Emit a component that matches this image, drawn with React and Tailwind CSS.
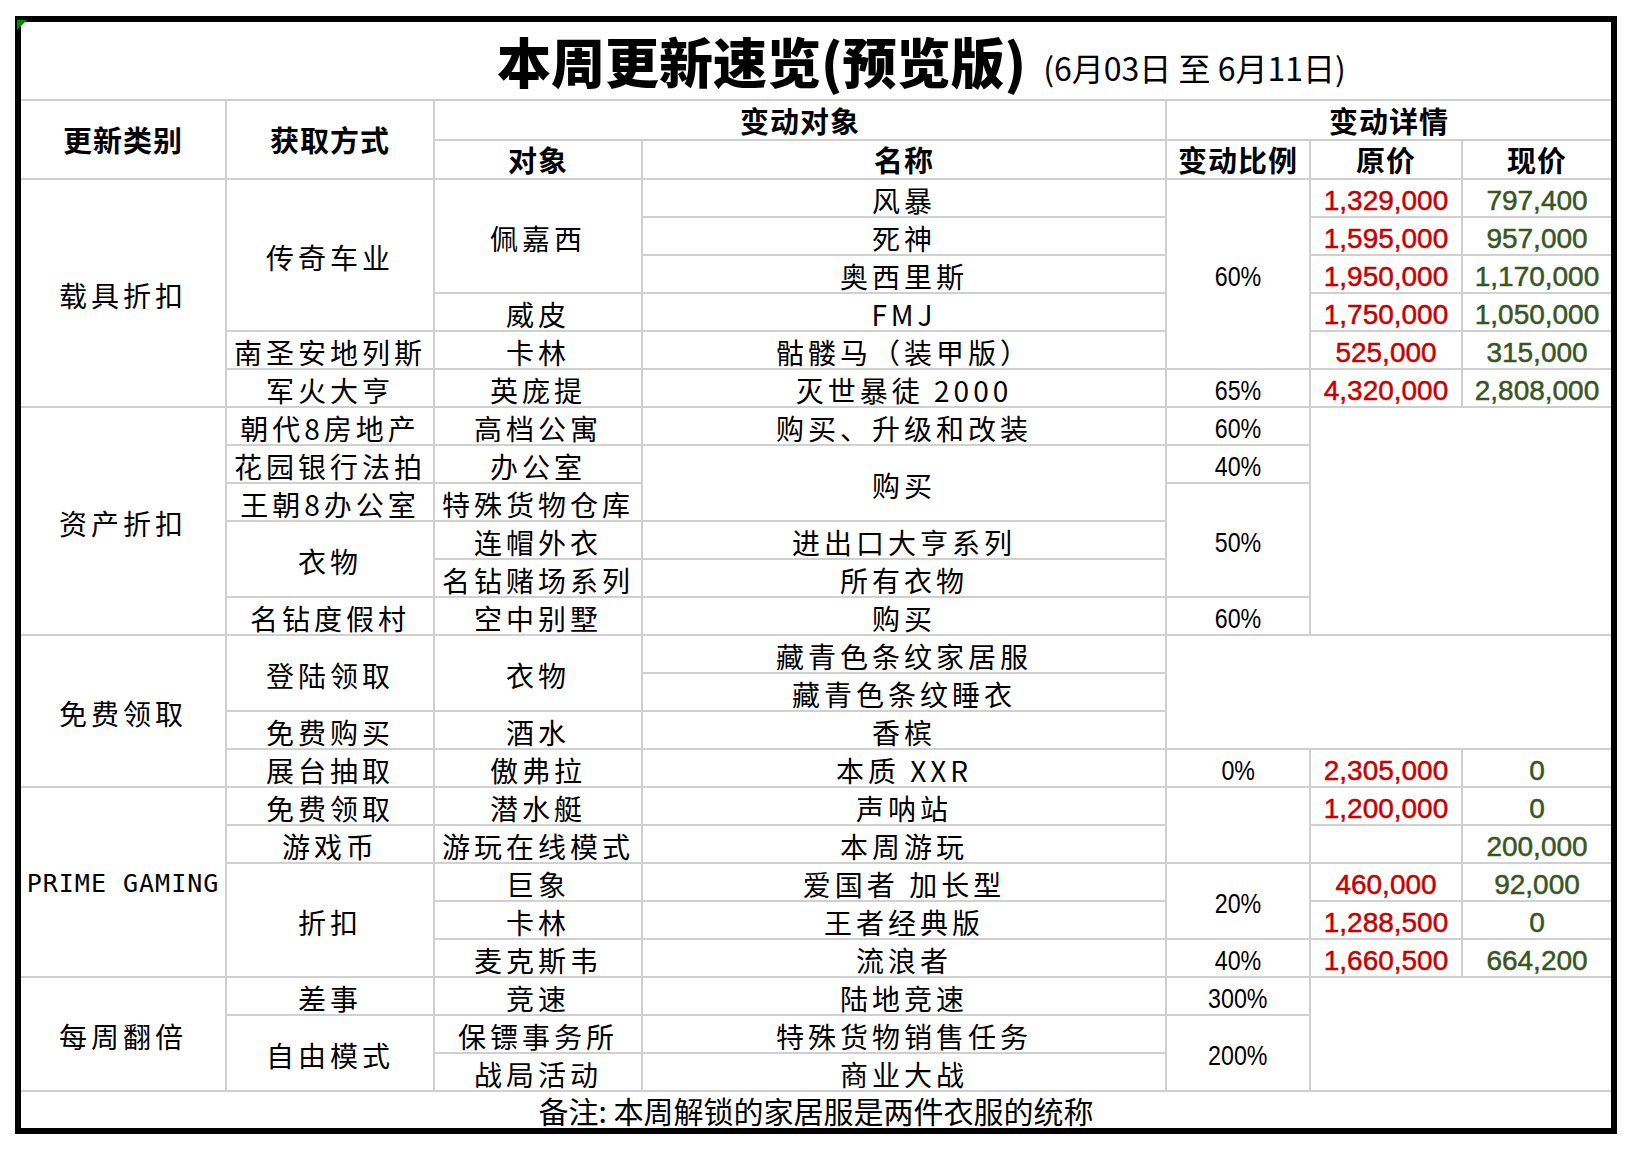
import React from 'react';

// cell kinds: h = header, t = body text, m = mono latin, p = percentage, r = original price, g = current price, e = empty
const cells = [
    // header
    { c: 'col-start-1 row-start-2 row-span-2', t: '更新类别', k: 'h' },
    { c: 'col-start-2 row-start-2 row-span-2', t: '获取方式', k: 'h' },
    { c: 'col-start-3 col-span-2 row-start-2', t: '变动对象', k: 'h' },
    { c: 'col-start-5 col-span-3 row-start-2', t: '变动详情', k: 'h' },
    { c: 'col-start-3 row-start-3', t: '对象', k: 'h' },
    { c: 'col-start-4 row-start-3', t: '名称', k: 'h' },
    { c: 'col-start-5 row-start-3', t: '变动比例', k: 'h' },
    { c: 'col-start-6 row-start-3', t: '原价', k: 'h' },
    { c: 'col-start-7 row-start-3', t: '现价', k: 'h' },

    // 更新类别
    { c: 'col-start-1 row-start-4 row-span-6', t: '载具折扣' },
    { c: 'col-start-1 row-start-10 row-span-6', t: '资产折扣' },
    { c: 'col-start-1 row-start-16 row-span-4', t: '免费领取' },
    { c: 'col-start-1 row-start-20 row-span-5', t: 'PRIME GAMING', k: 'm' },
    { c: 'col-start-1 row-start-25 row-span-3', t: '每周翻倍' },

    // 获取方式
    { c: 'col-start-2 row-start-4 row-span-4', t: '传奇车业' },
    { c: 'col-start-2 row-start-8', t: '南圣安地列斯' },
    { c: 'col-start-2 row-start-9', t: '军火大亨' },
    { c: 'col-start-2 row-start-10', t: '朝代8房地产' },
    { c: 'col-start-2 row-start-11', t: '花园银行法拍' },
    { c: 'col-start-2 row-start-12', t: '王朝8办公室' },
    { c: 'col-start-2 row-start-13 row-span-2', t: '衣物' },
    { c: 'col-start-2 row-start-15', t: '名钻度假村' },
    { c: 'col-start-2 row-start-16 row-span-2', t: '登陆领取' },
    { c: 'col-start-2 row-start-18', t: '免费购买' },
    { c: 'col-start-2 row-start-19', t: '展台抽取' },
    { c: 'col-start-2 row-start-20', t: '免费领取' },
    { c: 'col-start-2 row-start-21', t: '游戏币' },
    { c: 'col-start-2 row-start-22 row-span-3', t: '折扣' },
    { c: 'col-start-2 row-start-25', t: '差事' },
    { c: 'col-start-2 row-start-26 row-span-2', t: '自由模式' },

    // 对象
    { c: 'col-start-3 row-start-4 row-span-3', t: '佩嘉西' },
    { c: 'col-start-3 row-start-7', t: '威皮' },
    { c: 'col-start-3 row-start-8', t: '卡林' },
    { c: 'col-start-3 row-start-9', t: '英庞提' },
    { c: 'col-start-3 row-start-10', t: '高档公寓' },
    { c: 'col-start-3 row-start-11', t: '办公室' },
    { c: 'col-start-3 row-start-12', t: '特殊货物仓库' },
    { c: 'col-start-3 row-start-13', t: '连帽外衣' },
    { c: 'col-start-3 row-start-14', t: '名钻赌场系列' },
    { c: 'col-start-3 row-start-15', t: '空中别墅' },
    { c: 'col-start-3 row-start-16 row-span-2', t: '衣物' },
    { c: 'col-start-3 row-start-18', t: '酒水' },
    { c: 'col-start-3 row-start-19', t: '傲弗拉' },
    { c: 'col-start-3 row-start-20', t: '潜水艇' },
    { c: 'col-start-3 row-start-21', t: '游玩在线模式' },
    { c: 'col-start-3 row-start-22', t: '巨象' },
    { c: 'col-start-3 row-start-23', t: '卡林' },
    { c: 'col-start-3 row-start-24', t: '麦克斯韦' },
    { c: 'col-start-3 row-start-25', t: '竞速' },
    { c: 'col-start-3 row-start-26', t: '保镖事务所' },
    { c: 'col-start-3 row-start-27', t: '战局活动' },

    // 名称
    { c: 'col-start-4 row-start-4', t: '风暴' },
    { c: 'col-start-4 row-start-5', t: '死神' },
    { c: 'col-start-4 row-start-6', t: '奥西里斯' },
    { c: 'col-start-4 row-start-7', t: 'FMJ' },
    { c: 'col-start-4 row-start-8', t: '骷髅马（装甲版）' },
    { c: 'col-start-4 row-start-9', t: '灭世暴徒 2000' },
    { c: 'col-start-4 row-start-10', t: '购买、升级和改装' },
    { c: 'col-start-4 row-start-11 row-span-2', t: '购买' },
    { c: 'col-start-4 row-start-13', t: '进出口大亨系列' },
    { c: 'col-start-4 row-start-14', t: '所有衣物' },
    { c: 'col-start-4 row-start-15', t: '购买' },
    { c: 'col-start-4 row-start-16', t: '藏青色条纹家居服' },
    { c: 'col-start-4 row-start-17', t: '藏青色条纹睡衣' },
    { c: 'col-start-4 row-start-18', t: '香槟' },
    { c: 'col-start-4 row-start-19', t: '本质 XXR' },
    { c: 'col-start-4 row-start-20', t: '声呐站' },
    { c: 'col-start-4 row-start-21', t: '本周游玩' },
    { c: 'col-start-4 row-start-22', t: '爱国者 加长型' },
    { c: 'col-start-4 row-start-23', t: '王者经典版' },
    { c: 'col-start-4 row-start-24', t: '流浪者' },
    { c: 'col-start-4 row-start-25', t: '陆地竞速' },
    { c: 'col-start-4 row-start-26', t: '特殊货物销售任务' },
    { c: 'col-start-4 row-start-27', t: '商业大战' },

    // 变动比例
    { c: 'col-start-5 row-start-4 row-span-5', t: '60%', k: 'p' },
    { c: 'col-start-5 row-start-9', t: '65%', k: 'p' },
    { c: 'col-start-5 row-start-10', t: '60%', k: 'p' },
    { c: 'col-start-5 row-start-11', t: '40%', k: 'p' },
    { c: 'col-start-5 row-start-12 row-span-3', t: '50%', k: 'p' },
    { c: 'col-start-5 row-start-15', t: '60%', k: 'p' },
    { c: 'col-start-5 col-span-3 row-start-16 row-span-3', t: '', k: 'e' },
    { c: 'col-start-5 row-start-19', t: '0%', k: 'p' },
    { c: 'col-start-5 row-start-20 row-span-2', t: '', k: 'e' },
    { c: 'col-start-5 row-start-22 row-span-2', t: '20%', k: 'p' },
    { c: 'col-start-5 row-start-24', t: '40%', k: 'p' },
    { c: 'col-start-5 row-start-25', t: '300%', k: 'p' },
    { c: 'col-start-5 row-start-26 row-span-2', t: '200%', k: 'p' },

    // 原价 / 现价
    { c: 'col-start-6 row-start-4', t: '1,329,000', k: 'r' },
    { c: 'col-start-7 row-start-4', t: '797,400', k: 'g' },
    { c: 'col-start-6 row-start-5', t: '1,595,000', k: 'r' },
    { c: 'col-start-7 row-start-5', t: '957,000', k: 'g' },
    { c: 'col-start-6 row-start-6', t: '1,950,000', k: 'r' },
    { c: 'col-start-7 row-start-6', t: '1,170,000', k: 'g' },
    { c: 'col-start-6 row-start-7', t: '1,750,000', k: 'r' },
    { c: 'col-start-7 row-start-7', t: '1,050,000', k: 'g' },
    { c: 'col-start-6 row-start-8', t: '525,000', k: 'r' },
    { c: 'col-start-7 row-start-8', t: '315,000', k: 'g' },
    { c: 'col-start-6 row-start-9', t: '4,320,000', k: 'r' },
    { c: 'col-start-7 row-start-9', t: '2,808,000', k: 'g' },
    { c: 'col-start-6 col-span-2 row-start-10 row-span-6', t: '', k: 'e' },
    { c: 'col-start-6 row-start-19', t: '2,305,000', k: 'r' },
    { c: 'col-start-7 row-start-19', t: '0', k: 'g' },
    { c: 'col-start-6 row-start-20', t: '1,200,000', k: 'r' },
    { c: 'col-start-7 row-start-20', t: '0', k: 'g' },
    { c: 'col-start-6 row-start-21', t: '', k: 'e' },
    { c: 'col-start-7 row-start-21', t: '200,000', k: 'g' },
    { c: 'col-start-6 row-start-22', t: '460,000', k: 'r' },
    { c: 'col-start-7 row-start-22', t: '92,000', k: 'g' },
    { c: 'col-start-6 row-start-23', t: '1,288,500', k: 'r' },
    { c: 'col-start-7 row-start-23', t: '0', k: 'g' },
    { c: 'col-start-6 row-start-24', t: '1,660,500', k: 'r' },
    { c: 'col-start-7 row-start-24', t: '664,200', k: 'g' },
    { c: 'col-start-6 col-span-2 row-start-25 row-span-3', t: '', k: 'e' },
];

const kindClass = {
    h: "text-[29px] font-bold tracking-[1px]",
    t: "text-[28px] tracking-[4px] pt-[3px]",
    m: "text-[25px] tracking-[1px] pt-[3px] font-['DejaVu_Sans_Mono',monospace]",
    p: "text-[28px] pt-[6px] font-['Liberation_Sans',Arial,sans-serif]",
    r: "text-[28px] pt-[6px] text-[#c80000] [-webkit-text-stroke:0.5px_#c80000] font-['Liberation_Sans',Arial,sans-serif]",
    g: "text-[28px] pt-[6px] text-[#375623] [-webkit-text-stroke:0.5px_#375623] font-['Liberation_Sans',Arial,sans-serif]",
    e: '',
};

const Cell = ({ c, t, k = 't' }) => (
    <div className={`${c} bg-white flex items-center justify-center leading-none whitespace-nowrap ${kindClass[k]}`}>
        {k === 'p' ? <span className="inline-block scale-x-[0.83]">{t}</span> : t}
    </div>
);

export default function App() {
    return (
        <div className="w-[1632px] min-h-[1149px] bg-white pt-[16px] pl-[15px] text-black font-['Noto_Sans_CJK_SC',sans-serif]">
            <div className="relative w-[1602px] border-[6px] border-black">
                {/* little green marker in the top-left corner */}
                <svg className="absolute -left-[4px] -top-[2px]" width="10" height="10" viewBox="0 0 10 10">
                    <polygon points="0,0 10,0 0,10" fill="#008a00" />
                </svg>

                <div className="grid gap-[2px] bg-[#d0d0d0] grid-cols-[204px_206px_206px_522px_142px_150px_148px] grid-rows-[77px_38px_37px_repeat(24,36px)_36px]">
                    <div className="col-start-1 col-span-7 row-start-1 bg-white flex items-center pl-[476px] whitespace-nowrap">
                        <span className="text-[54px] font-black leading-none">本周更新速览(预览版)</span>
                        <span className="text-[32px] leading-none ml-[17px] mt-[12px]">(6月03日 至 6月11日)</span>
                    </div>

                    {cells.map((cell, i) => (
                        <Cell key={i} {...cell} />
                    ))}

                    <div className="col-start-1 col-span-7 row-start-28 bg-white flex items-center justify-center text-[30px] leading-none whitespace-nowrap">
                        备注: 本周解锁的家居服是两件衣服的统称
                    </div>
                </div>
            </div>
        </div>
    );
}
